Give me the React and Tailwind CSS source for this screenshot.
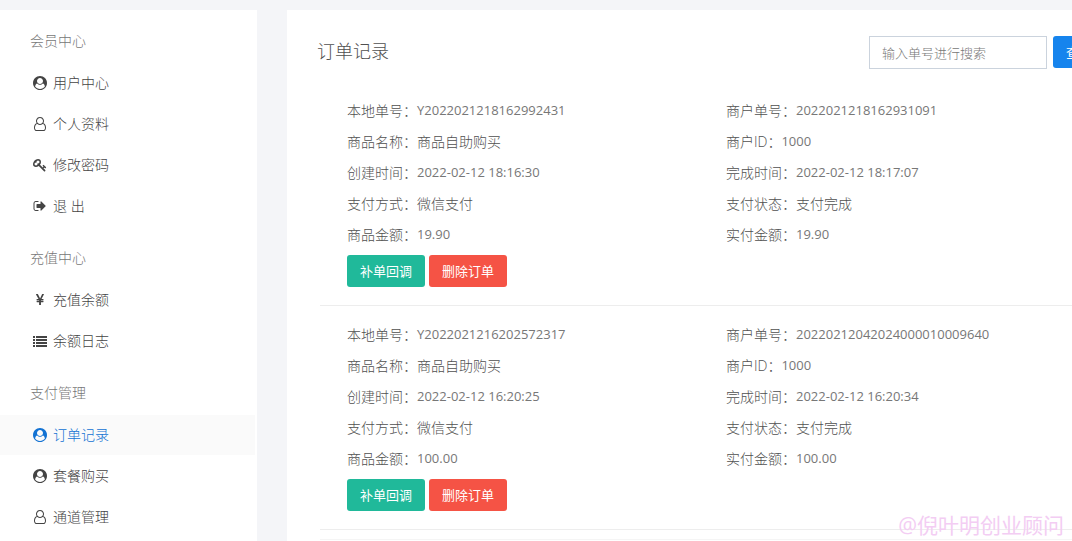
import React from "react";

const icons = {
  circle: {
    box: "0 0 1792 1792",
    d: "M1523 1339q-22-155-87.5-257.5t-184.5-118.5q-67 74-159.5 115.5t-195.5 41.5-195.5-41.5-159.5-115.5q-119 16-184.5 118.5t-87.5 257.5q106 150 271 237.5t356 87.5 356-87.5 271-237.5zm-243-699q0-159-112.5-271.5t-271.5-112.5-271.5 112.5-112.5 271.5 112.5 271.5 271.5 112.5 271.5-112.5 112.5-271.5zm512 256q0 182-71 347.5t-190.5 286-285.5 191.5-349 71q-182 0-348-71t-286-191-191-286-71-348 71-348 191-286 286-191 348-71 348 71 286 191 191 286 71 348z",
  },
  user: {
    box: "-128 0 1792 1792",
    d: "M1201 784q47 14 89.5 38t89 73 79.5 115.5 55 172 22 236.5q0 154-100 263.5t-241 109.5h-854q-141 0-241-109.5t-100-263.5q0-131 22-236.5t55-172 79.5-115.5 89-73 89.5-38q-79-125-79-272 0-104 40.5-198.5t109.5-163.5 163.5-109.5 198.5-40.5 198.5 40.5 163.5 109.5 109.5 163.5 40.5 198.5q0 147-79 272zm-433-656q-159 0-271.5 112.5t-112.5 271.5 112.5 271.5 271.5 112.5 271.5-112.5 112.5-271.5-112.5-271.5-271.5-112.5zm427 1536q88 0 150.5-71.5t62.5-173.5q0-239-78.5-377t-225.5-145q-145 127-336 127t-336-127q-147 7-225.5 145t-78.5 377q0 102 62.5 173.5t150.5 71.5h854z",
  },
  key: {
    box: "0 0 1792 1792",
    d: "M832 512q0-80-56-136t-136-56-136 56-56 136q0 42 19 83-41-19-83-19-80 0-136 56t-56 136 56 136 136 56 136-56 56-136q0-42-19-83 41 19 83 19 80 0 136-56t56-136zm851 704q0 17-49 66t-66 49q-9 0-28.5-16t-36.5-33-38.5-40-24.5-26l-96 96 220 220q28 28 28 68 0 42-39 81t-81 39q-40 0-68-28l-671-671q-176 131-365 131-163 0-265.5-102.5t-102.5-265.5q0-160 95-313t248-248 313-95q163 0 265.5 102.5t102.5 265.5q0 189-131 365l355 355 96-96q-3-3-26-24.5t-40-38.5-33-36.5-16-28.5q0-17 49-66t66-49q13 0 23 10 6 6 46 44.5t82 79.5 86.5 86 73 78 28.5 41z",
  },
  exit: {
    box: "0 0 1792 1792",
    d: "M704 1440q0 4 1 20t.5 26.5-3 23.5-10 19.5-20.5 6.5h-320q-119 0-203.5-84.5t-84.5-203.5v-704q0-119 84.5-203.5t203.5-84.5h320q13 0 22.5 9.5t9.5 22.5q0 4 1 20t.5 26.5-3 23.5-10 19.5-20.5 6.5h-320q-66 0-113 47t-47 113v704q0 66 47 113t113 47h312l11.5 1 11.5 3 8 5.5 7 9 2 13.5zm928-544q0 26-19 45l-544 544q-19 19-45 19t-45-19-19-45v-288h-448q-26 0-45-19t-19-45v-384q0-26 19-45t45-19h448v-288q0-26 19-45t45-19 45 19l544 544q19 19 19 45z",
  },
  yen: {
    box: "0 0 1792 1792",
    d: "M985.5 1536h-172q-13 0-22.5-9t-9.5-23v-330h-288q-13 0-22.5-9t-9.5-23v-103q0-13 9.5-22.5t22.5-9.5h288v-85h-288q-13 0-22.5-9t-9.5-23v-104q0-13 9.5-22.5t22.5-9.5h214l-321-578q-8-16 0-32 10-16 28-16h194q19 0 29 18l215 425q19 38 56 125 10-24 30.5-68t27.5-61l191-420q8-19 29-19h191q17 0 27 16 9 14 1 31l-313 579h215q13 0 22.5 9.5t9.5 22.5v104q0 14-9.5 23t-22.5 9h-290v85h290q13 0 22.5 9.5t9.5 22.5v103q0 14-9.5 23t-22.5 9h-290v330q0 13-9.5 22.5t-22.5 9.5z",
  },
  list: {
    box: "0 0 14 14",
    d: "M0 2h2v2H0zM3 2h11v2H3zM0 5h2v2H0zM3 5h11v2H3zM0 8h2v2H0zM3 8h11v2H3zM0 11h2v2H0zM3 11h11v2H3z",
  },
};

function Icon({ name }) {
  return (
    <svg viewBox={icons[name].box} className="h-3.5 w-3.5 shrink-0" fill="currentColor" aria-hidden="true">
      <path d={icons[name].d} />
    </svg>
  );
}

const menu = [
  {
    title: "会员中心",
    items: [
      ["circle", "用户中心"],
      ["user", "个人资料"],
      ["key", "修改密码"],
      ["exit", "退 出"],
    ],
  },
  {
    title: "充值中心",
    items: [
      ["yen", "充值余额"],
      ["list", "余额日志"],
    ],
  },
  {
    title: "支付管理",
    items: [
      ["circle", "订单记录", true],
      ["circle", "套餐购买"],
      ["user", "通道管理"],
    ],
  },
];

const orders = [
  {
    left: [
      ["本地单号", "Y2022021218162992431"],
      ["商品名称", "商品自助购买", true],
      ["创建时间", "2022-02-12 18:16:30"],
      ["支付方式", "微信支付", true],
      ["商品金额", "19.90"],
    ],
    right: [
      ["商户单号", "2022021218162931091"],
      ["商户ID", "1000"],
      ["完成时间", "2022-02-12 18:17:07"],
      ["支付状态", "支付完成", true],
      ["实付金额", "19.90"],
    ],
  },
  {
    left: [
      ["本地单号", "Y2022021216202572317"],
      ["商品名称", "商品自助购买", true],
      ["创建时间", "2022-02-12 16:20:25"],
      ["支付方式", "微信支付", true],
      ["商品金额", "100.00"],
    ],
    right: [
      ["商户单号", "20220212042024000010009640"],
      ["商户ID", "1000"],
      ["完成时间", "2022-02-12 16:20:34"],
      ["支付状态", "支付完成", true],
      ["实付金额", "100.00"],
    ],
  },
];

function Fields({ rows }) {
  return (
    <dl className="px-[15px]">
      {rows.map(([label, value, isText]) => (
        <div key={label} className="flex h-[31px] items-center whitespace-nowrap">
          <dt>{label}：</dt>
          <dd className={isText ? "" : "text-[13px] font-normal text-[#777]"}>{value}</dd>
        </div>
      ))}
    </dl>
  );
}

export default function App() {
  return (
    <div className="relative flex min-h-screen items-stretch gap-[30px] overflow-hidden bg-[#f4f5f8] pt-2.5 font-['Open_Sans','Noto_Sans_CJK_SC',sans-serif] text-sm font-light text-[#505050]">
      <aside className="w-[257px] shrink-0 bg-white">
        <nav>
          {menu.map((group) => (
            <section key={group.title}>
              <h2 className="px-[30px] pt-5 pb-[11px] text-sm leading-[22px] text-[#777]">{group.title}</h2>
              <ul>
                {group.items.map(([icon, label, active]) => (
                  <li key={label} className="pr-0.5 pb-px">
                    <a
                      href="#"
                      aria-current={active ? "page" : undefined}
                      className={
                        active
                          ? "flex h-10 items-center gap-1.5 bg-[#fafafa] pl-[33px] text-[#1272d3]"
                          : "flex h-10 items-center gap-1.5 pl-[33px] text-[#444]"
                      }
                    >
                      <Icon name={icon} />
                      <span>{label}</span>
                    </a>
                  </li>
                ))}
              </ul>
            </section>
          ))}
        </nav>
      </aside>

      <main className="min-w-[848px] flex-1 bg-white px-[30px]">
        <header className="flex items-start justify-between pt-[26px] pb-[13px]">
          <h1 className="text-lg leading-[30px]">订单记录</h1>
          <form className="flex items-start gap-1.5" onSubmit={(e) => e.preventDefault()}>
            <input
              type="search"
              aria-label="输入单号进行搜索"
              placeholder="输入单号进行搜索"
              className="h-[33px] w-[178px] border border-[#cbd3dd] px-3 text-[13px] outline-none placeholder:text-[#777]"
            />
            <button type="submit" className="h-8 rounded-[3px] bg-[#1684ed] px-[13px] text-[13px] font-normal text-white">
              查询
            </button>
          </form>
        </header>

        <ul className="mx-[3px] border-b border-[#f5f5f5] pb-[9px]">
          {orders.map((order) => (
            <li key={order.left[0][1]} className="border-b border-[#ededed] px-3 pt-[13px] pb-[18px]">
              <div className="grid grid-cols-2">
                <Fields rows={order.left} />
                <Fields rows={order.right} />
              </div>
              <div className="mt-[5px] flex gap-1 px-[15px]">
                <button type="button" className="h-8 rounded-[3px] bg-[#20b99a] px-[13px] text-[13px] font-normal text-white">
                  补单回调
                </button>
                <button type="button" className="h-8 rounded-[3px] bg-[#f55345] px-[13px] text-[13px] font-normal text-white">
                  删除订单
                </button>
              </div>
            </li>
          ))}
        </ul>
      </main>

      <p className="absolute right-2 bottom-0 text-[21px] leading-8 font-normal text-[#f3cdf3]">@倪叶明创业顾问</p>
    </div>
  );
}
